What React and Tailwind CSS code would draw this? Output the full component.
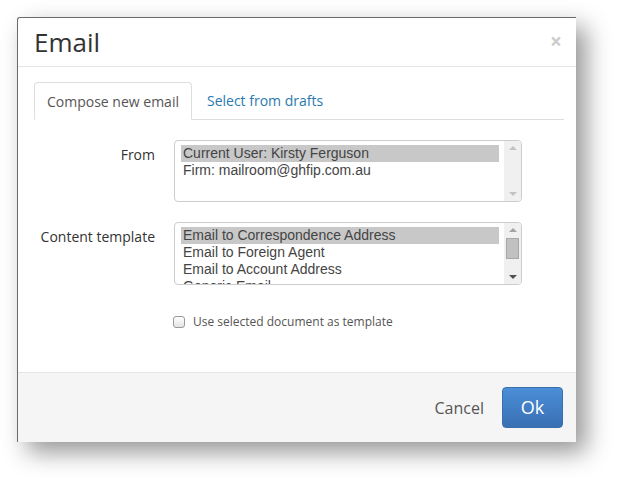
import React from 'react'

const sans = { fontFamily: '"Open Sans", "Liberation Sans", sans-serif' }

function Scrollbar({ thumb }) {
    return (
        <div className="w-[17px] bg-[#f0f0f0] flex flex-col items-center justify-between py-[5px]">
            <span className={`w-0 h-0 border-x-[4px] border-x-transparent border-b-[4px] ${thumb ? 'border-b-[#a3a3a3]' : 'border-b-[#c2c2c2]'}`}></span>
            {thumb ? <div className="w-[13px] h-[21px] bg-[#c1c1c1] border border-[#a8a8a8] -mt-[10px]"></div> : null}
            <span className={`w-0 h-0 border-x-[4px] border-x-transparent border-t-[4px] ${thumb ? 'border-t-[#505050]' : 'border-t-[#c2c2c2]'}`}></span>
        </div>
    )
}

function ListBox({ items, height, thumb }) {
    return (
        <div className={`flex w-[348px] ${height} border border-[#cccccc] rounded-[4px] bg-white overflow-hidden`}>
            <div className="flex-1 pl-[6px] pr-[5px] pt-[4px] overflow-hidden">
                {items.map((item, i) => (
                    <div key={item} className={`h-[17px] leading-[17px] text-[14px] text-[#444] pl-[2px] whitespace-nowrap ${i === 0 ? 'bg-[#c8c8c8]' : ''}`}
                        style={{ fontFamily: '"Liberation Sans", Arial, sans-serif' }}>{item}</div>
                ))}
            </div>
            <Scrollbar thumb={thumb} />
        </div>
    )
}

export default function App() {
    return (
        <div className="w-[624px] h-[491px] bg-white pl-[17px] pt-[17px]" style={sans}>
            <div className="w-[559px] h-[425px] bg-white border-t border-l border-[#6b6b6b] rounded-tl-[3px] shadow-[10px_10px_24px_rgba(0,0,0,0.42)] flex flex-col">
                <div className="h-[49px] flex items-center justify-between pl-[16px] pr-[14px] border-b border-[#e5e5e5]">
                    <h3 className="text-[26px] text-[#333] leading-none -mt-[1px]">Email</h3>
                    <button className="text-[21px] font-bold text-black opacity-20 leading-none -mt-[2px]">×</button>
                </div>
                <div className="flex-1 pl-[16px] pr-[12px] pt-[15px]">
                    <div className="flex border-b border-[#dddddd] h-[38px]">
                        <div className="h-[38px] px-[12px] flex items-center border border-[#dddddd] border-b-white rounded-t-[4px] bg-white text-[14px] text-[#555]">Compose new email</div>
                        <div className="h-[37px] px-[15px] flex items-center text-[14px] text-[#2a7ab0]">Select from drafts</div>
                    </div>
                    <div className="flex flex-col gap-[20px] pt-[20px]">
                        <div className="flex">
                            <label className="w-[121px] text-right text-[14px] text-[#333] pt-[4px]">From</label>
                            <div className="ml-[19px]">
                                <ListBox height="h-[62px]" items={['Current User: Kirsty Ferguson', 'Firm: mailroom@ghfip.com.au']} />
                            </div>
                        </div>
                        <div className="flex">
                            <label className="w-[121px] text-right text-[14px] text-[#333] pt-[4px]">Content template</label>
                            <div className="ml-[19px]">
                                <ListBox height="h-[63px]" thumb items={['Email to Correspondence Address', 'Email to Foreign Agent', 'Email to Account Address', 'Generic Email']} />
                            </div>
                        </div>
                    </div>
                    <label className="flex items-center gap-[8px] ml-[139px] mt-[28px] text-[12px] text-[#555]">
                        <span className="w-[12px] h-[12px] border border-[#9a9a9a] rounded-[3px] bg-linear-to-b from-[#ffffff] to-[#e4e4e4]"></span>
                        Use selected document as template
                    </label>
                </div>
                <div className="h-[70px] bg-[#f5f5f5] border-t border-[#e5e5e5] flex items-center justify-end gap-[18px] pr-[13px]">
                    <button className="text-[16px] text-[#555]">Cancel</button>
                    <button className="w-[61px] h-[41px] rounded-[4px] bg-linear-to-b from-[#4a8fd8] to-[#3a6fb3] border border-[#3a6fae] text-white text-[18px]">Ok</button>
                </div>
            </div>
        </div>
    )
}
